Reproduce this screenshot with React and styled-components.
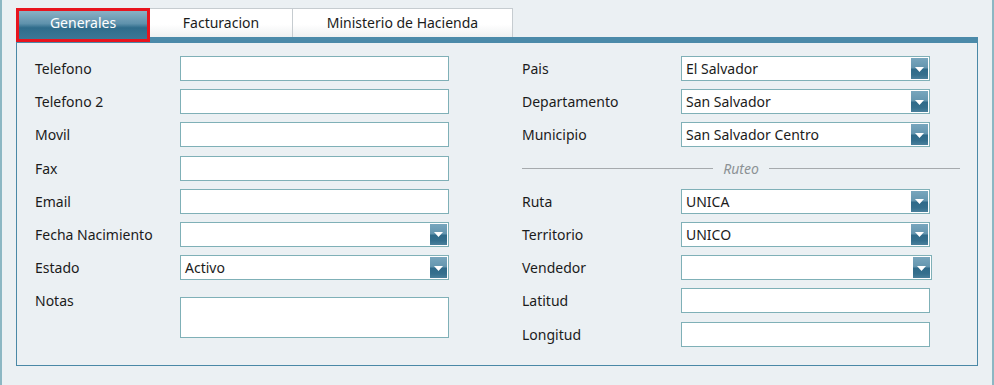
import React from 'react';
import styled, { createGlobalStyle } from 'styled-components';

const GlobalStyle = createGlobalStyle`
  html, body {
    margin: 0;
    padding: 0;
    background-color: #ebf0f3;
  }
  * {
    box-sizing: border-box;
  }
`;

const Page = styled.div`
  width: 994px;
  height: 385px;
  border-left: 2px solid #8cb7c3;
  border-right: 2px solid #8cb7c3;
  padding: 8px 14px 0 14px;
  font-family: "Noto Sans", "Open Sans", sans-serif;
  font-size: 14px;
  color: #1b1b1b;
`;

const TabRow = styled.div`
  display: flex;
  align-items: flex-start;
  height: 29px;
`;

const Tab = styled.div`
  position: relative;
  z-index: ${p => (p.$active ? 2 : 1)};
  width: ${p => p.$width}px;
  height: ${p => (p.$active ? 34 : 29)}px;
  margin-left: ${p => (p.$first ? 0 : -1)}px;
  display: flex;
  align-items: center;
  justify-content: center;
  line-height: 1;
  border: ${p => (p.$active ? '3px solid #e8141e' : '1px solid #c6ccd0')};
  border-bottom: ${p => (p.$active ? '3px solid #e8141e' : 'none')};
  background: ${p =>
    p.$active
      ? 'linear-gradient(#8ab1c5 0%, #5f92ac 45%, #2f6c8b 60%, #3b7796 100%)'
      : 'linear-gradient(#ffffff 0%, #ffffff 55%, #eef0f1 100%)'};
  color: ${p => (p.$active ? '#ffffff' : '#1b1b1b')};
  padding-bottom: ${p => (p.$active ? 4 : 0)}px;
`;

const Bar = styled.div`
  height: 6px;
  background-color: #4b8aa9;
`;

const Panel = styled.div`
  height: 323px;
  border: 1px solid #4a88a6;
  border-top: none;
  padding: 13px 17px 0 18px;
  display: grid;
  grid-template-columns: 414px 438px;
  column-gap: 73px;
  align-items: start;
`;

const Column = styled.div`
  display: flex;
  flex-direction: column;
  gap: 8.2px;
`;

const Row = styled.div`
  display: grid;
  grid-template-columns: ${p => p.$label}px 1fr;
  align-items: ${p => (p.$top ? 'start' : 'center')};
  min-height: 25px;
`;

const Label = styled.span`
  line-height: 25px;
  white-space: nowrap;
`;

const Field = styled.div`
  width: ${p => p.$width}px;
  height: ${p => p.$height || 25}px;
  margin-top: ${p => p.$offset || 0}px;
  border: 1px solid #7fb0b7;
  background-color: #ffffff;
  display: flex;
  align-items: center;
  padding: 2px 1px 1px 4px;
`;

const Value = styled.span`
  flex: 1;
  line-height: 1;
  white-space: nowrap;
`;

const DropButton = styled.div`
  align-self: flex-start;
  width: 17px;
  height: 21px;
  margin-top: -1px;
  display: flex;
  align-items: center;
  justify-content: center;
  padding-top: 2px;
  background: linear-gradient(#78a6bd 0%, #6495ae 48%, #2f6a89 52%, #356f8d 80%, #4a809c 100%);
`;

const Separator = styled.div`
  display: flex;
  align-items: center;
  gap: 10px;
  height: 25px;
  color: #8c9295;
  font-style: italic;

  &::before,
  &::after {
    content: '';
    flex: 1;
    height: 1px;
    background-color: #a6aaad;
  }
`;

const Arrow = () => (
  <svg width="9" height="6" viewBox="0 0 9 6">
    <path d="M0 0 H9 L4.5 5 Z" fill="#ffffff" />
  </svg>
);

const Input = ({ width }) => <Field $width={width} />;

const Select = ({ width, value }) => (
  <Field $width={width}>
    <Value>{value}</Value>
    <DropButton>
      <Arrow />
    </DropButton>
  </Field>
);

const leftRows = [
  { label: 'Telefono' },
  { label: 'Telefono 2' },
  { label: 'Movil' },
  { label: 'Fax' },
  { label: 'Email' },
  { label: 'Fecha Nacimiento', select: true, value: '' },
  { label: 'Estado', select: true, value: 'Activo' }
];

const rightTop = [
  { label: 'Pais', value: 'El Salvador' },
  { label: 'Departamento', value: 'San Salvador' },
  { label: 'Municipio', value: 'San Salvador Centro' }
];

const App = () => (
  <>
    <GlobalStyle />
    <Page>
      <TabRow>
        <Tab $active $first $width={134}>Generales</Tab>
        <Tab $width={144}>Facturacion</Tab>
        <Tab $width={221}>Ministerio de Hacienda</Tab>
      </TabRow>
      <Bar />
      <Panel>
        <Column>
          {leftRows.map(row => (
            <Row key={row.label} $label={145}>
              <Label>{row.label}</Label>
              {row.select ? (
                <Select width={269} value={row.value} />
              ) : (
                <Input width={269} />
              )}
            </Row>
          ))}
          <Row $label={145} $top>
            <Label>Notas</Label>
            <Field $width={269} $height={41} $offset={9} />
          </Row>
        </Column>

        <Column>
          {rightTop.map(row => (
            <Row key={row.label} $label={159}>
              <Label>{row.label}</Label>
              <Select width={249} value={row.value} />
            </Row>
          ))}
          <Separator>Ruteo</Separator>
          <Row $label={159}>
            <Label>Ruta</Label>
            <Select width={249} value="UNICA" />
          </Row>
          <Row $label={159}>
            <Label>Territorio</Label>
            <Select width={249} value="UNICO" />
          </Row>
          <Row $label={159}>
            <Label>Vendedor</Label>
            <Select width={251} value="" />
          </Row>
          <Row $label={159}>
            <Label>Latitud</Label>
            <Input width={249} />
          </Row>
          <Row $label={159}>
            <Label>Longitud</Label>
            <Input width={249} />
          </Row>
        </Column>
      </Panel>
    </Page>
  </>
);

export default App;
